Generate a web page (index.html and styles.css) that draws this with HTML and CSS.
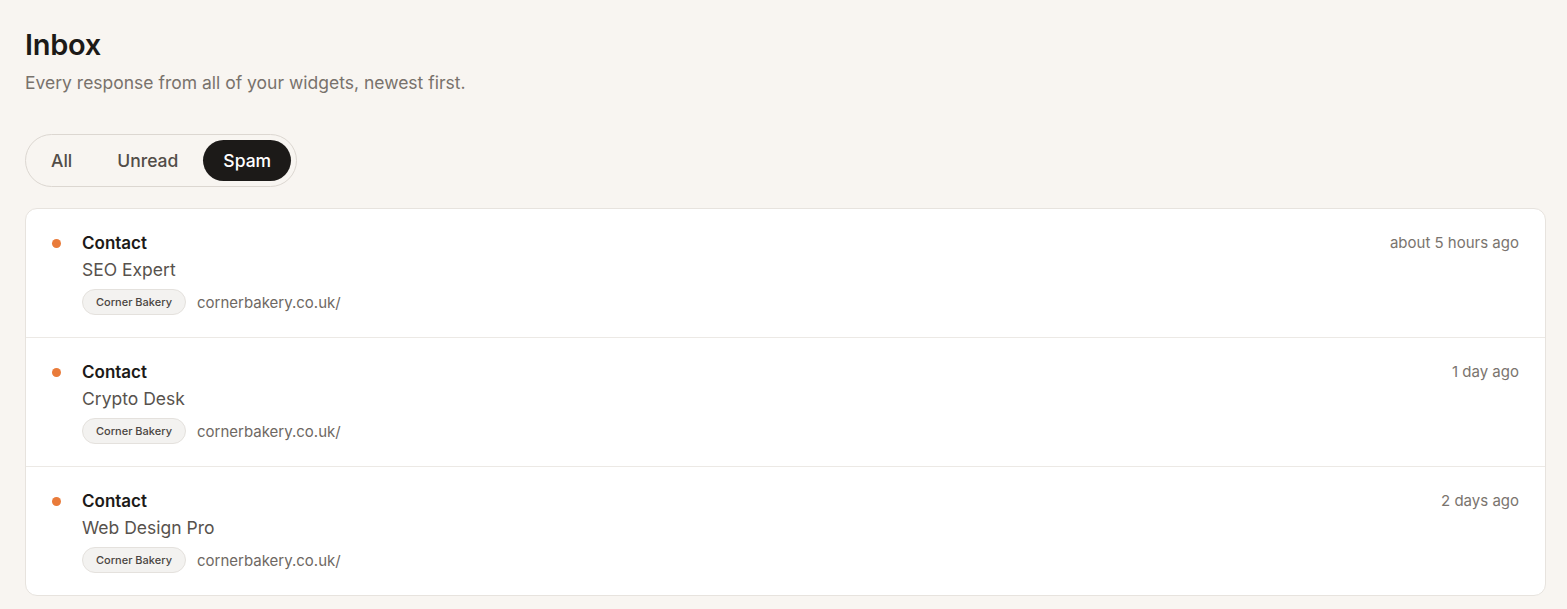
FILE: index.html
```html
<!DOCTYPE html>
<html lang="en">
<head>
<meta charset="utf-8">
<title>Inbox</title>
<link rel="stylesheet" href="styles.css">
</head>
<body>
<main class="page">
  <header class="head">
    <h1 class="title">Inbox</h1>
    <p class="subtitle">Every response from all of your widgets, newest first.</p>
  </header>
  <nav class="tabs">
    <button class="tab">All</button>
    <button class="tab">Unread</button>
    <button class="tab tab-active">Spam</button>
  </nav>
  <section class="list">
    <article class="row">
      <span class="dot"></span>
      <div class="body">
        <div class="name">Contact</div>
        <div class="from">SEO Expert</div>
        <div class="meta"><span class="badge">Corner Bakery</span><span class="url">cornerbakery.co.uk/</span></div>
      </div>
      <time class="time">about 5 hours ago</time>
    </article>
    <article class="row">
      <span class="dot"></span>
      <div class="body">
        <div class="name">Contact</div>
        <div class="from">Crypto Desk</div>
        <div class="meta"><span class="badge">Corner Bakery</span><span class="url">cornerbakery.co.uk/</span></div>
      </div>
      <time class="time">1 day ago</time>
    </article>
    <article class="row">
      <span class="dot"></span>
      <div class="body">
        <div class="name">Contact</div>
        <div class="from">Web Design Pro</div>
        <div class="meta"><span class="badge">Corner Bakery</span><span class="url">cornerbakery.co.uk/</span></div>
      </div>
      <time class="time">2 days ago</time>
    </article>
  </section>
</main>
</body>
</html>
```
FILE: styles.css
```css
* { box-sizing: border-box; }
html, body { margin: 0; padding: 0; }
body {
  background: #f8f5f1;
  font-family: Inter, "Noto Sans", sans-serif;
  color: #1c1a18;
}
.page {
  padding: 26px 21px 14px 25px;
}
.head { margin: 0; }
.title {
  margin: 0;
  font-size: 29px;
  line-height: 38px;
  font-weight: 600;
  letter-spacing: -0.3px;
  color: #1c1a18;
}
.subtitle {
  margin: 7px 0 0 0;
  font-size: 17.5px;
  line-height: 24px;
  color: #78726c;
}
.tabs {
  display: inline-flex;
  gap: 5px;
  margin-top: 39px;
  padding: 5px;
  border: 1px solid #dcd7d1;
  border-radius: 999px;
  background: #f8f5f1;
}
.tab {
  border: none;
  background: transparent;
  font-family: inherit;
  font-size: 17.5px;
  font-weight: 500;
  color: #524d48;
  height: 41px;
  padding: 0 20px;
  border-radius: 999px;
  cursor: pointer;
}
.tab-active {
  background: #1c1a18;
  color: #ffffff;
}
.list {
  margin-top: 21px;
  background: #ffffff;
  border: 1px solid #e7e3de;
  border-radius: 12px;
  overflow: hidden;
}
.row {
  display: flex;
  align-items: flex-start;
  padding: 22px 26px 22px 26px;
  border-top: 1px solid #ece9e5;
}
.row:first-child { border-top: none; }
.dot {
  width: 9px;
  height: 9px;
  border-radius: 50%;
  background: #e97b3a;
  margin: 8px 21px 0 0;
  flex: none;
}
.body { flex: 1; min-width: 0; }
.name {
  font-size: 17px;
  line-height: 24px;
  font-weight: 600;
  color: #1c1a18;
}
.from {
  margin-top: 3px;
  font-size: 17.5px;
  line-height: 24px;
  color: #57524d;
}
.meta {
  display: flex;
  align-items: center;
  gap: 11px;
  margin-top: 7px;
}
.badge {
  display: inline-flex;
  align-items: center;
  height: 26px;
  padding: 0 13px;
  border: 1px solid #e4e1dd;
  border-radius: 999px;
  background: #f3f2f0;
  font-size: 11px;
  font-weight: 500;
  color: #4a4541;
}
.url {
  font-size: 15px;
  color: #6e6863;
}
.time {
  flex: none;
  font-size: 15px;
  line-height: 24px;
  color: #7a746e;
}
```
